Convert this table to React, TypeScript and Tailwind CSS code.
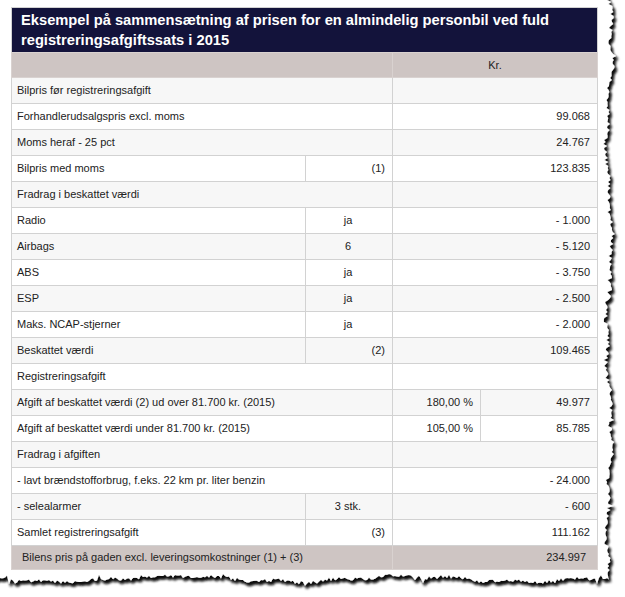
import React from "react";

type Cell = {
  text: string;
  span?: number;
  align?: "left" | "center" | "right";
};

const rows: Cell[][] = [
  [{ text: "Bilpris før registreringsafgift", span: 2 }, { text: "", span: 2 }],
  [{ text: "Forhandlerudsalgspris excl. moms", span: 2 }, { text: "99.068", span: 2, align: "right" }],
  [{ text: "Moms heraf - 25 pct", span: 2 }, { text: "24.767", span: 2, align: "right" }],
  [{ text: "Bilpris med moms" }, { text: "(1)", align: "right" }, { text: "123.835", span: 2, align: "right" }],
  [{ text: "Fradrag i beskattet værdi", span: 2 }, { text: "", span: 2 }],
  [{ text: "Radio" }, { text: "ja", align: "center" }, { text: "- 1.000", span: 2, align: "right" }],
  [{ text: "Airbags" }, { text: "6", align: "center" }, { text: "- 5.120", span: 2, align: "right" }],
  [{ text: "ABS" }, { text: "ja", align: "center" }, { text: "- 3.750", span: 2, align: "right" }],
  [{ text: "ESP" }, { text: "ja", align: "center" }, { text: "- 2.500", span: 2, align: "right" }],
  [{ text: "Maks. NCAP-stjerner" }, { text: "ja", align: "center" }, { text: "- 2.000", span: 2, align: "right" }],
  [{ text: "Beskattet værdi" }, { text: "(2)", align: "right" }, { text: "109.465", span: 2, align: "right" }],
  [{ text: "Registreringsafgift", span: 2 }, { text: "", span: 2 }],
  [
    { text: "Afgift af beskattet værdi (2) ud over 81.700 kr. (2015)", span: 2 },
    { text: "180,00 %", align: "right" },
    { text: "49.977", align: "right" },
  ],
  [
    { text: "Afgift af beskattet værdi under 81.700 kr. (2015)", span: 2 },
    { text: "105,00 %", align: "right" },
    { text: "85.785", align: "right" },
  ],
  [{ text: "Fradrag i afgiften", span: 2 }, { text: "", span: 2 }],
  [
    { text: "- lavt brændstofforbrug, f.eks. 22 km pr. liter benzin", span: 2 },
    { text: "- 24.000", span: 2, align: "right" },
  ],
  [{ text: "- selealarmer" }, { text: "3 stk.", align: "center" }, { text: "- 600", span: 2, align: "right" }],
  [{ text: "Samlet registreringsafgift" }, { text: "(3)", align: "right" }, { text: "111.162", span: 2, align: "right" }],
];

// torn paper edge, seeded so it looks the same every run
let seed = 11;
const rnd = () => {
  seed = (seed * 16807) % 2147483647;
  return seed / 2147483647;
};

function tornPath() {
  const p: string[] = ["M-30,-30", "L609,-30"];
  for (let y = -30; y <= 578; y += 2) {
    const x =
      609 +
      Math.sin(y / 31) * 2.6 +
      Math.sin(y / 8.7) * 1.5 +
      (rnd() - 0.5) * 4 +
      (rnd() > 0.9 ? (rnd() - 0.5) * 9 : 0);
    p.push(`L${x.toFixed(1)},${y.toFixed(1)}`);
  }
  for (let x = 609; x >= -30; x -= 2) {
    const y =
      579 +
      Math.sin(x / 37) * 2.8 +
      Math.sin(x / 9.3) * 1.4 +
      (rnd() - 0.5) * 4 +
      (rnd() > 0.9 ? (rnd() - 0.5) * 9 : 0);
    p.push(`L${x.toFixed(1)},${y.toFixed(1)}`);
  }
  p.push("Z");
  return p.join(" ");
}

const paper = tornPath();

const alignClass = {
  left: "text-left",
  center: "text-center",
  right: "text-right",
};

export default function App() {
  return (
    <div className="relative w-[625px] h-[597px] bg-white overflow-hidden font-['Liberation_Sans',Arial,sans-serif]">
      <svg className="absolute inset-0" width="625" height="597" viewBox="0 0 625 597">
        <defs>
          <filter id="tear" x="-10%" y="-10%" width="130%" height="130%">
            <feGaussianBlur in="SourceAlpha" stdDeviation="1.8" />
            <feOffset dx="2" dy="2.5" result="blur" />
            <feFlood floodColor="#111111" floodOpacity="1" />
            <feComposite in2="blur" operator="in" />
            <feMerge>
              <feMergeNode />
              <feMergeNode />
              <feMergeNode in="SourceGraphic" />
            </feMerge>
          </filter>
        </defs>
        <path d={paper} fill="#ffffff" filter="url(#tear)" />
      </svg>

      <div className="relative pl-[11px] pt-[7px]">
        <table className="w-[586px] table-fixed border-collapse border border-[#d2d2d2] text-[11px] text-[#222]">
          <colgroup>
            <col className="w-[294px]" />
            <col className="w-[87px]" />
            <col className="w-[88px]" />
            <col className="w-[117px]" />
          </colgroup>
          <thead>
            <tr>
              <th
                colSpan={4}
                className="bg-[#13133b] text-white text-left font-bold text-[14.7px] leading-[20px] px-[9px] pt-[2px] pb-[2px]"
              >
                Eksempel på sammensætning af prisen for en almindelig personbil ved fuld
                registreringsafgiftssats i 2015
              </th>
            </tr>
            <tr className="bg-[#cec5c3]">
              <td colSpan={2} className="border border-[#d9d2d0] leading-[14px] py-[5px]" />
              <td
                colSpan={2}
                className="border border-[#d9d2d0] text-center font-normal leading-[14px] py-[5px]"
              >
                Kr.
              </td>
            </tr>
          </thead>
          <tbody>
            {rows.map((row, i) => (
              <tr key={i} className={i % 2 === 0 ? "bg-[#f7f7f7]" : "bg-white"}>
                {row.map((c, j) => (
                  <td
                    key={j}
                    colSpan={c.span ?? 1}
                    className={`border border-[#d2d2d2] leading-[15px] py-[5px] pl-[5px] pr-[7px] whitespace-nowrap ${
                      alignClass[c.align ?? "left"]
                    }`}
                  >
                    {c.text}
                  </td>
                ))}
              </tr>
            ))}
            <tr className="bg-[#cec5c3]">
              <td colSpan={2} className="border border-[#d9d2d0] leading-[15px] py-[4px] px-[10px] whitespace-nowrap">
                Bilens pris på gaden excl. leveringsomkostninger (1) + (3)
              </td>
              <td
                colSpan={2}
                className="border border-[#d9d2d0] text-right leading-[15px] py-[4px] px-[11px]"
              >
                234.997
              </td>
            </tr>
          </tbody>
        </table>
      </div>
    </div>
  );
}
